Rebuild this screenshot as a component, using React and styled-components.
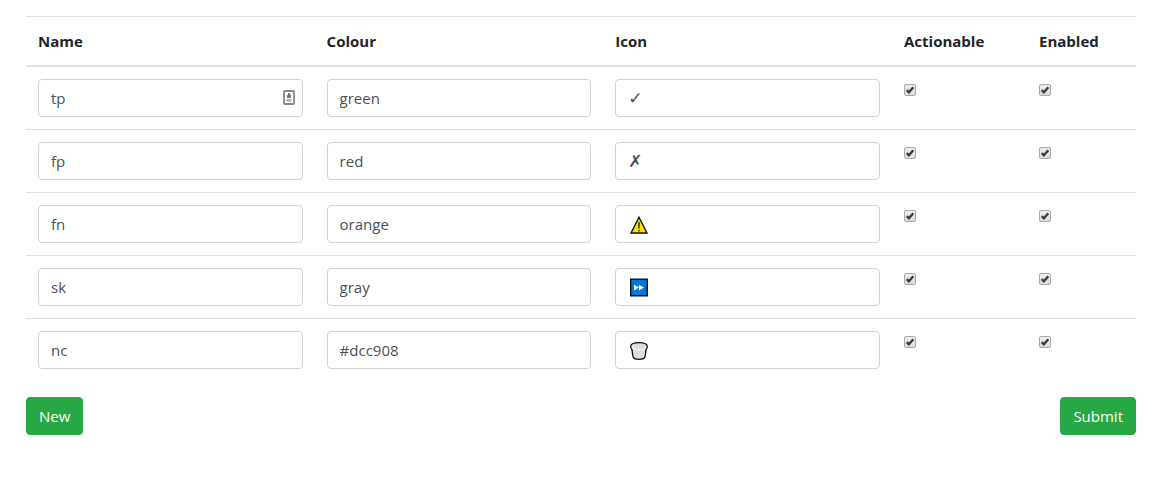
import React, { useState } from 'react';
import styled, { createGlobalStyle } from 'styled-components';

const GlobalStyle = createGlobalStyle`
  *, *::before, *::after { box-sizing: border-box; }
  body {
    margin: 0;
    background: #fff;
    color: #212529;
    font-family: "Open Sans", "Noto Sans", sans-serif;
    font-size: 15px;
    line-height: 24px;
  }
`;

const Page = styled.form`
  padding: 16px 35px 16px 26px;
`;

const Table = styled.table`
  width: 100%;
  margin-bottom: 16px;
  table-layout: fixed;
  border-spacing: 0;
`;

const Column = styled.col`
  width: ${({ $width }) => $width || 'auto'};
`;

const HeadCell = styled.th`
  padding: 12px;
  border-top: 1px solid #dee2e6;
  border-bottom: 2px solid #dee2e6;
  font-weight: 700;
  text-align: left;
`;

const Row = styled.tr`
  &:not(:first-child) > td {
    border-top: 1px solid #dee2e6;
  }
`;

const Cell = styled.td`
  padding: 12px;
  vertical-align: top;
`;

const Field = styled.div`
  position: relative;
  display: flex;
`;

const TextInput = styled.input`
  width: 100%;
  min-width: 0;
  height: 38px;
  padding: 6px 12px;
  border: 1px solid #ced4da;
  border-radius: 4px;
  background: #fff;
  color: #495057;
  font: inherit;
  &:focus {
    outline: none;
    border-color: #80bdff;
  }
`;

const IconInput = styled(TextInput)`
  font-family: "DejaVu Sans", sans-serif;
  font-size: 17px;
  font-weight: 400;
`;

const Glyph = styled.svg`
  position: absolute;
  top: 10px;
  left: 14px;
  width: 20px;
  height: 20px;
  pointer-events: none;
`;

const AutofillMark = styled.svg`
  position: absolute;
  top: 11px;
  right: 8px;
  width: 12px;
  height: 15px;
  pointer-events: none;
`;

const CheckLabel = styled.label`
  position: relative;
  display: block;
  width: 12px;
  height: 12px;
  margin-top: 5px;
`;

const CheckInput = styled.input`
  appearance: none;
  display: block;
  width: 12px;
  height: 12px;
  margin: 0;
  border: 1px solid #a9a9a9;
  border-radius: 2px;
  background: linear-gradient(#eeeeee, #dcdcdc);
  &:not(:checked) + svg { display: none; }
`;

const CheckMark = styled.svg`
  position: absolute;
  top: 0;
  left: 0;
  width: 12px;
  height: 12px;
  pointer-events: none;
`;

const Actions = styled.div`
  display: flex;
  justify-content: space-between;
`;

const Button = styled.button`
  height: 38px;
  padding: 6px 12px;
  border: 1px solid #28a745;
  border-radius: 4px;
  background: #28a745;
  color: #fff;
  font: inherit;
  cursor: pointer;
`;

const glyphs = {
  warning: (
    <Glyph viewBox="0 0 20 20" aria-hidden="true">
      <path d="M10 2.2 18 18H2Z" fill="#ffde00" stroke="#111" strokeWidth="1.4" />
      <path d="M10 7v6.5M10 14.8v1.6" stroke="#4a4000" strokeWidth="1.6" />
    </Glyph>
  ),
  forward: (
    <Glyph viewBox="0 0 20 20" aria-hidden="true">
      <path d="M1.7 1.2h16.6v16.6H1.7z" fill="#0078d7" stroke="#111" strokeWidth="1.4" />
      <path d="M5 6.8l5 2.8-5 2.8zM10 6.8l5 2.8-5 2.8z" fill="#fff" />
    </Glyph>
  ),
  bin: (
    <Glyph viewBox="0 0 20 20" aria-hidden="true">
      <path
        d="M1.7 5.6C1.7 3 5 1.7 10 1.7S18.300 3 18.300 5.600c0 1.300-.5 2.200-1.200 2.800l-1 6.900c-.4 1.900-2.700 3-6.100 3s-5.700-1.100-6.100-3l-1-6.900C2.200 7.800 1.700 6.900 1.700 5.600Z"
        fill="#dedede"
        stroke="#111"
        strokeWidth="1.3"
      />
      <path d="M3.200 5.600C3.200 7.800 6 8.800 10 8.800s6.800-1 6.800-3.200" fill="none" stroke="#f7f7f7" strokeWidth="1.2" />
    </Glyph>
  ),
};

const initialRows = [
  { name: 'tp', colour: 'green', icon: '✓', autofill: true },
  { name: 'fp', colour: 'red', icon: '✗' },
  { name: 'fn', colour: 'orange', icon: '', glyph: 'warning' },
  { name: 'sk', colour: 'gray', icon: '', glyph: 'forward' },
  { name: 'nc', colour: '#dcc908', icon: '', glyph: 'bin' },
];

function Checkbox({ label }) {
  const [checked, setChecked] = useState(true);
  return (
    <CheckLabel>
      <CheckInput
        type="checkbox"
        aria-label={label}
        checked={checked}
        onChange={(e) => setChecked(e.target.checked)}
      />
      <CheckMark viewBox="0 0 12 12" aria-hidden="true">
        <path d="M2.7 6.2 4.9 8.3 9.3 3.3" fill="none" stroke="#3c3c3c" strokeWidth="2.4" />
      </CheckMark>
    </CheckLabel>
  );
}

function LabelRow({ row }) {
  return (
    <Row>
      <Cell>
        <Field>
          <TextInput type="text" aria-label="Name" defaultValue={row.name} />
          {row.autofill && (
            <AutofillMark viewBox="0 0 12 15" aria-hidden="true">
              <rect x="1" y="1" width="10" height="13" rx="0.8" fill="#fff" stroke="#8a8a8a" strokeWidth="1.8" />
              <path d="M5 3h2v2h1v3H4V5h1z" fill="#777" />
              <path d="M3.5 9h5v2.5h-5z" fill="#aaa" />
            </AutofillMark>
          )}
        </Field>
      </Cell>
      <Cell>
        <Field>
          <TextInput type="text" aria-label="Colour" defaultValue={row.colour} />
        </Field>
      </Cell>
      <Cell>
        <Field>
          <IconInput type="text" aria-label="Icon" defaultValue={row.icon} />
          {row.glyph && glyphs[row.glyph]}
        </Field>
      </Cell>
      <Cell><Checkbox label="Actionable" /></Cell>
      <Cell><Checkbox label="Enabled" /></Cell>
    </Row>
  );
}

export default function App() {
  const [rows, setRows] = useState(initialRows);
  return (
    <>
      <GlobalStyle />
      <Page onSubmit={(e) => e.preventDefault()}>
        <Table>
          <colgroup>
            <Column $width="26%" />
            <Column />
            <Column />
            <Column $width="135px" />
            <Column $width="109px" />
          </colgroup>
          <thead>
            <tr>
              <HeadCell scope="col">Name</HeadCell>
              <HeadCell scope="col">Colour</HeadCell>
              <HeadCell scope="col">Icon</HeadCell>
              <HeadCell scope="col">Actionable</HeadCell>
              <HeadCell scope="col">Enabled</HeadCell>
            </tr>
          </thead>
          <tbody>
            {rows.map((row, index) => (
              <LabelRow key={index} row={row} />
            ))}
          </tbody>
        </Table>
        <Actions>
          <Button
            type="button"
            onClick={() => setRows([...rows, { name: '', colour: '', icon: '' }])}
          >
            New
          </Button>
          <Button type="submit">Submit</Button>
        </Actions>
      </Page>
    </>
  );
}
